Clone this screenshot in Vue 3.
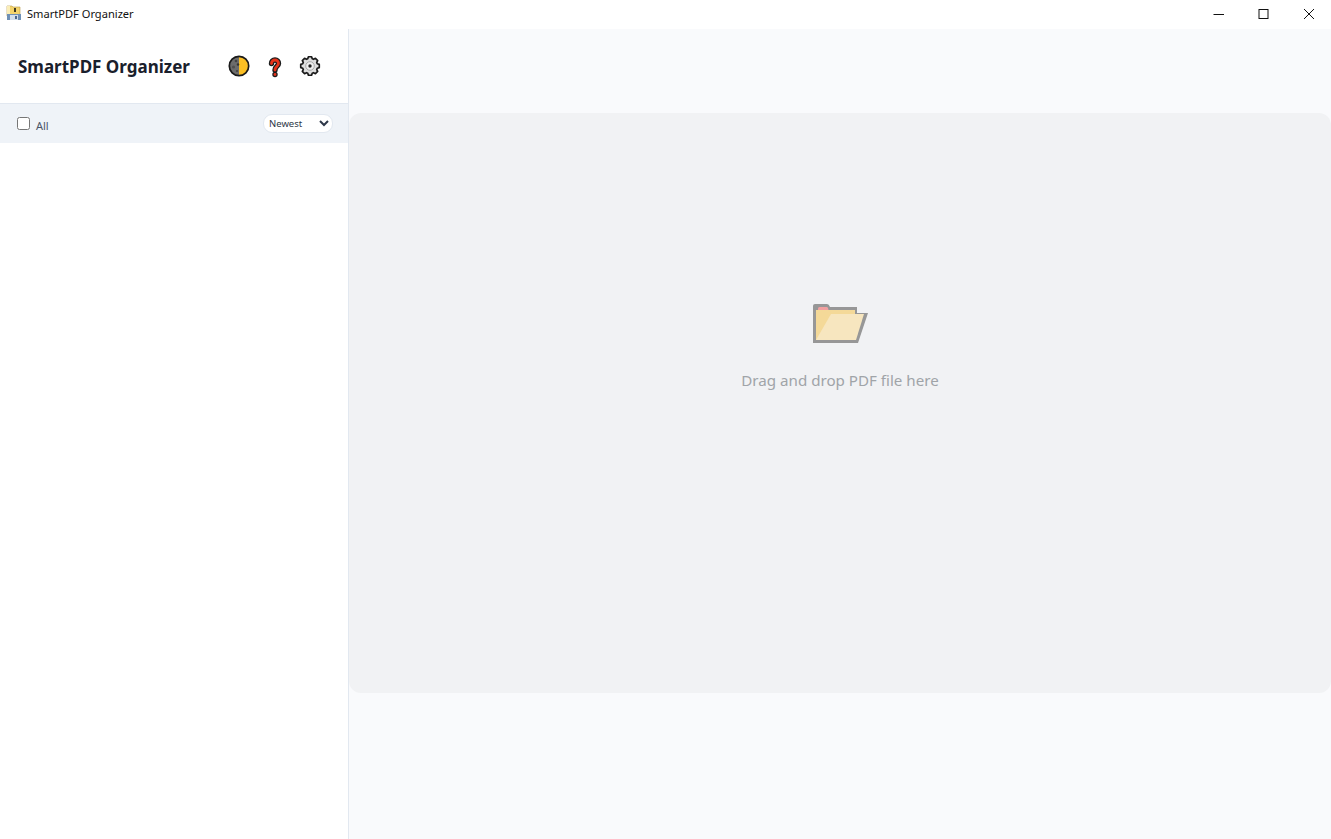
<script setup>
import { ref } from "vue"

const allChecked = ref(false)
const sortOrder = ref("Newest")
const sortOptions = ["Newest", "Oldest", "Name"]

// 8 bumps round the settings icon
function gearPath() {
  const pts = []
  for (let i = 0; i < 8; i++) {
    const a = (i * Math.PI) / 4
    for (const [off, r] of [[-0.3, 7.6], [-0.17, 9.4], [0.17, 9.4], [0.3, 7.6]]) {
      pts.push((11 + r * Math.cos(a + off)).toFixed(2) + " " + (11 + r * Math.sin(a + off)).toFixed(2))
    }
  }
  return "M" + pts.join("L") + "Z"
}
const gear = gearPath()
</script>

<template>
  <div class="app-window">
    <header class="titlebar">
      <div class="titlebar-left">
        <svg class="app-icon" width="16" height="16" viewBox="0 0 16 16">
          <path d="M1 1h5l1 1h7v9H1z" fill="#f4d46c" stroke="#b7994a" stroke-width=".6" />
          <path d="M1 1h3v9H1z" fill="#fbeeb8" />
          <path d="M1 9h14v6H1z" fill="#6f90b6" />
          <path d="M4 10h8v5H4z" fill="#d3dfeb" />
          <path d="M9 11h2v3H9z" fill="#4b668a" />
          <rect x="8" y="3" width="2" height="4" fill="#3f3a20" />
        </svg>
        <span class="window-title">SmartPDF Organizer</span>
      </div>
      <div class="window-controls">
        <button class="win-btn">
          <svg width="12" height="12" viewBox="0 0 12 12"><path d="M0.500 6.500h10.500" stroke="#111" fill="none" /></svg>
        </button>
        <button class="win-btn">
          <svg width="12" height="12" viewBox="0 0 12 12"><rect x="1" y="1.500" width="9" height="9" stroke="#111" fill="none" /></svg>
        </button>
        <button class="win-btn">
          <svg width="12" height="12" viewBox="0 0 12 12"><path d="M1 1l10 10M11 1L1 11" stroke="#111" fill="none" /></svg>
        </button>
      </div>
    </header>

    <div class="content">
      <aside class="sidebar">
        <div class="sidebar-head">
          <h1 class="brand">SmartPDF Organizer</h1>
          <div class="head-icons">
            <button class="icon-btn">
              <svg width="22" height="22" viewBox="0 0 22 22">
                <path d="M11 1a10 10 0 0 0 0 20z" fill="#6c6c6c" />
                <path d="M11 1a10 10 0 0 1 0 20z" fill="#fbbf24" />
                <circle cx="8" cy="6" r="1.300" fill="#444" />
                <circle cx="5.500" cy="12" r="1.600" fill="#505050" />
                <circle cx="9" cy="16" r="1.100" fill="#444" />
                <circle cx="10" cy="9.500" r="1.200" fill="#333" />
                <circle cx="11" cy="11" r="9.700" fill="none" stroke="#1a1a1a" stroke-width="1.700" />
              </svg>
            </button>
            <button class="icon-btn">
              <svg width="22" height="24" viewBox="0 0 22 24">
                <path d="M7.500 9.500C7.500 7.500 9 6 11 6C13 6 14.500 7.500 14.500 9.500C14.500 12 11 12.500 11 16" fill="none" stroke="#1c1c1c" stroke-width="5.400" stroke-linecap="round" />
                <circle cx="11" cy="20.500" r="2.700" fill="#1c1c1c" />
                <path d="M7.500 9.500C7.500 7.500 9 6 11 6C13 6 14.500 7.500 14.500 9.500C14.500 12 11 12.500 11 16" fill="none" stroke="#e8321a" stroke-width="2.800" stroke-linecap="round" />
                <circle cx="11" cy="20.500" r="1.400" fill="#e8321a" />
              </svg>
            </button>
            <button class="icon-btn">
              <svg width="22" height="22" viewBox="0 0 22 22">
                <path :d="gear" fill="#dedede" stroke="#1a1a1a" stroke-width="1.700" stroke-linejoin="round" />
                <circle cx="11" cy="11" r="4.300" fill="#efefef" stroke="#a8a8a8" stroke-width="1" />
                <circle cx="11" cy="11" r="1.700" fill="#222" />
              </svg>
            </button>
          </div>
        </div>
        <div class="filter-bar">
          <label class="check-all">
            <input type="checkbox" v-model="allChecked" />
            <span>All</span>
          </label>
          <select class="sort-select" v-model="sortOrder">
            <option v-for="opt in sortOptions" :key="opt">{{ opt }}</option>
          </select>
        </div>
      </aside>

      <main class="main">
        <div class="dropzone">
          <svg class="folder" width="56" height="40" viewBox="0 0 56 40">
            <path d="M1 39V2Q1 0 3 0H15Q17 0 18 3H45V9H56L46 39Z" fill="#979797" />
            <path d="M4 36V6H43V36Z" fill="#f4d998" />
            <path d="M6 6V4.500Q6 3 7.500 3H15Q16 3 16.500 6Z" fill="#f2a0a0" />
            <path d="M4 36L19 10H52L44 36Z" fill="#f7e6bf" />
          </svg>
          <p class="drop-text">Drag and drop PDF file here</p>
        </div>
      </main>
    </div>
  </div>
</template>

<style scoped>
.app-window {
  height: 839px;
  display: flex;
  flex-direction: column;
  font-family: "Noto Sans", "Open Sans", sans-serif;
  background: #fff;
}
.titlebar {
  height: 29px;
  flex-shrink: 0;
  display: flex;
  justify-content: space-between;
  background: #fff;
}
.titlebar-left {
  display: flex;
  align-items: flex-start;
  padding: 5px 0 0 6px;
  gap: 5px;
}
.window-title {
  font-size: 11.100px;
  line-height: 17px;
  color: #111;
}
.window-controls {
  display: flex;
}
.win-btn {
  width: 45px;
  height: 27px;
  border: none;
  background: none;
  padding: 0;
  display: flex;
  align-items: center;
  justify-content: center;
}
.content {
  flex: 1;
  display: flex;
  min-height: 0;
}
.sidebar {
  width: 348px;
  flex-shrink: 0;
  border-right: 1px solid #e2e8f0;
  background: #fff;
}
.sidebar-head {
  height: 74px;
  display: flex;
  align-items: center;
  justify-content: space-between;
  padding: 0 27px 0 18px;
  border-bottom: 1px solid #e2e8f0;
}
.brand {
  margin: 1px 0 0;
  font-size: 17px;
  font-weight: 700;
  color: #1a202c;
}
.head-icons {
  display: flex;
  gap: 13.500px;
}
.icon-btn {
  border: none;
  background: none;
  padding: 0;
  display: flex;
  align-items: center;
}
.filter-bar {
  height: 39px;
  display: flex;
  align-items: center;
  justify-content: space-between;
  padding: 0 15px 0 17px;
  background: #eff3f8;
}
.check-all {
  display: flex;
  align-items: center;
  gap: 6px;
  font-size: 11px;
  color: #4a5568;
}
.check-all input {
  width: 13px;
  height: 13px;
  margin: 0 0 1px;
}
.check-all span {
  padding-top: 3px;
}
.sort-select {
  width: 70px;
  height: 19px;
  padding: 0 1px;
  font-family: "Noto Sans", sans-serif;
  font-size: 9.500px;
  color: #2d3748;
  background: #fff;
  border: 1px solid #e2e8f0;
  border-radius: 9px;
}
.main {
  flex: 1;
  background: #f9fafc;
  padding-top: 84px;
}
.dropzone {
  height: 580px;
  background: #f1f2f4;
  border-radius: 12px;
  display: flex;
  flex-direction: column;
  align-items: center;
  padding-top: 191px;
  box-sizing: border-box;
}
.folder {
  display: block;
}
.drop-text {
  margin: 26px 0 0;
  font-size: 15.150px;
  color: #a0a4a8;
}
</style>
